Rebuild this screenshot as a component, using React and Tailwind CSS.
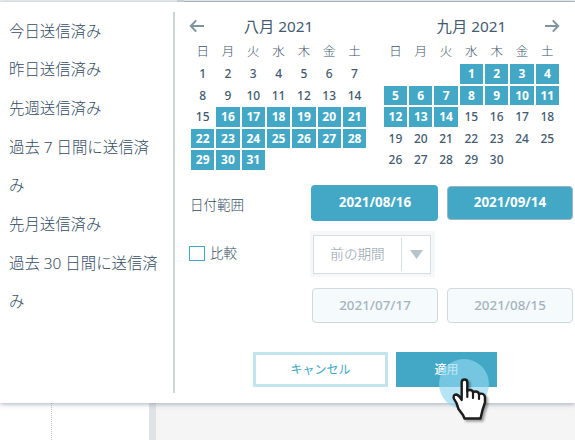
import React from 'react';

const presets = ['今日送信済み', '昨日送信済み', '先週送信済み', '過去 7 日間に送信済み', '先月送信済み', '過去 30 日間に送信済み'];
const weekdays = ['日', '月', '火', '水', '木', '金', '土'];

function Arrow({ right }) {
  return (
    <svg width="16" height="14" viewBox="0 0 16 14" fill="none" stroke="#7f93a3" strokeWidth="2" className={right ? 'rotate-180' : 'relative -left-px'}>
      <path d="M15 7H2M7.2 1.4 1.8 7l5.4 5.6" />
    </svg>
  );
}

function Month({ title, offset, days, from, to, prev, next }) {
  const cells = [...Array(offset).fill(null), ...Array.from({ length: days }, (_, i) => i + 1)];
  return (
    <div className="w-[177.2px]">
      <div className="flex h-[26px] items-center">
        <div className="w-4">{prev && <Arrow />}</div>
        <div className="flex-1 text-center text-[15.3px] leading-[26px] whitespace-nowrap">{title}</div>
        <div className="w-4">{next && <Arrow right />}</div>
      </div>
      <div className="grid h-[24px] grid-cols-7 pt-px text-center text-[12.5px] leading-[24px] font-light text-[#3c546b]">
        {weekdays.map((d) => <div key={d}>{d}</div>)}
      </div>
      <div className="grid auto-rows-[21.5px] grid-cols-7 text-center text-[12px] leading-[19px]">
        {cells.map((d, i) => (
          <div key={i} className="p-px">
            {d && (
              <div className={d >= from && d <= to ? 'h-[19.5px] bg-[#42a8c6] font-bold text-white' : 'h-[19.5px] font-medium'}>{d}</div>
            )}
          </div>
        ))}
      </div>
    </div>
  );
}

function Hand() {
  return (
    <svg width="38" height="46" viewBox="0 0 38 46" className="absolute top-[376px] left-[451px] drop-shadow-[2px_2px_1px_rgba(0,0,0,0.35)]">
      <path
        d="M10.700 24V6.500Q10.700 3.500 13.500 3.500T16.300 6.500V14.500Q21 13 22 16Q27 14.500 28 18Q33 16.500 34 21V26.500L31.500 34L29.500 42.500H13.500L12 39L7.500 33L5.500 27L2.800 22.500Q2 18.500 5 18.500Q8 19 10.700 24Z"
        fill="#fff" stroke="#1c1c1c" strokeWidth="2.400" strokeLinejoin="round"
      />
      <path d="M16.300 13v8M22 16v6M28 18v5" fill="none" stroke="#1c1c1c" strokeWidth="2.200" strokeLinecap="round" />
    </svg>
  );
}

export default function App() {
  return (
    <div className="relative flex h-[440px] w-[575px] flex-col overflow-hidden bg-[#f5f5f5] font-['Noto_Sans','Noto_Sans_CJK_JP',sans-serif] text-[#435a70]">
      <div className="flex h-[2px] shrink-0">
        <div className="w-[177px] bg-[#f0f0f0]" />
        <div className="w-[7px] bg-[#d5dbdf]" />
        <div className="flex-1 border-b border-[#b5c2ca] bg-[#f0f2f3]" />
      </div>
      <div className="z-10 flex h-[401px] shrink-0 bg-white shadow-[0_1px_5px_rgba(90,110,130,0.55)]">
        <div className="flex w-[173px] flex-col pt-[10.500px] pl-[9px] text-[15.400px] leading-[38.700px] font-light text-[#334c64]">
          {presets.map((p) => <div key={p} className="w-[153px]">{p}</div>)}
        </div>
        <div className="mt-[10px] h-[381px] w-[2px] bg-[#ced6da]" />
        <div className="flex w-[400px] flex-col pt-[11px] pl-[15px]">
          <div className="flex gap-[15.600px]">
            <Month title="八月 2021" offset={0} days={31} from={16} to={31} prev />
            <Month title="九月 2021" offset={3} days={30} from={1} to={14} next />
          </div>
          <div className="mt-[14px] flex h-[36px] items-center">
            <div className="w-[121px] pt-[6px] text-[13.500px] font-light text-[#334c64]">日付範囲</div>
            <div className="flex h-[36px] w-[127px] items-center justify-center rounded-[4px] bg-[#42a8c6] pl-px text-[13.400px] font-bold text-white">2021/08/16</div>
            <div className="ml-[9px] flex h-[34px] w-[126px] items-center justify-center rounded-[4px] border border-[#9db3bf] bg-[#42a8c6] text-[13.400px] font-bold text-white">2021/09/14</div>
          </div>
          <div className="mt-[10px] flex h-[46px] items-center">
            <div className="flex w-[120px] items-center gap-[5px] text-[13.500px] font-light text-[#334c64]">
              <div className="-ml-px h-[15px] w-[16px] border border-[#42a8c6] bg-white" />比較
            </div>
            <div className="h-[46px] w-[125px] bg-[#f5f7f8] py-[4px] pr-[4px] pl-[3px]">
              <div className="flex h-[39px] items-center border border-[#d8dfe3] bg-white">
                <div className="w-[87px] text-center text-[13.600px] font-light text-[#8d9ca9]">前の期間</div>
                <div className="flex h-[33px] flex-1 items-center justify-center border-l border-[#d8dfe3]">
                  <svg width="13" height="9" viewBox="0 0 13 9"><path d="M0 0H13L6.500 9Z" fill="#b8c3ca" /></svg>
                </div>
              </div>
            </div>
          </div>
          <div className="mt-[11px] ml-[122px] flex gap-[9px] text-[13.400px] font-medium text-[#a6b3bd]">
            <div className="flex h-[35px] w-[126px] items-center justify-center rounded-[4px] border border-[#d1d9de] bg-[#f5fafd]">2021/07/17</div>
            <div className="flex h-[35px] w-[126px] items-center justify-center rounded-[4px] border border-[#d1d9de] bg-[#f5fafd]">2021/08/15</div>
          </div>
          <div className="mt-[29px] ml-[63px] flex gap-[8px] text-[12px]">
            <div className="flex h-[35px] w-[135px] items-center justify-center border-[3px] border-[#c2e4ed] pt-px text-[#42a8c6]">キャンセル</div>
            <div className="flex h-[35px] w-[101px] items-center justify-center bg-[#42a8c6] pt-px font-medium text-white">適用</div>
          </div>
        </div>
      </div>
      <div className="flex flex-1">
        <div className="w-[51px] bg-white" />
        <div className="w-[98px] border-l border-dotted border-[#c2cad0] bg-white" />
        <div className="w-[7px] bg-[#dfe3e6]" />
      </div>
      <div className="absolute top-[359px] left-[439px] z-20 h-[50px] w-[50px] rounded-full bg-[#8fd6f0]/65" />
      <div className="absolute inset-0 z-30"><Hand /></div>
    </div>
  );
}
